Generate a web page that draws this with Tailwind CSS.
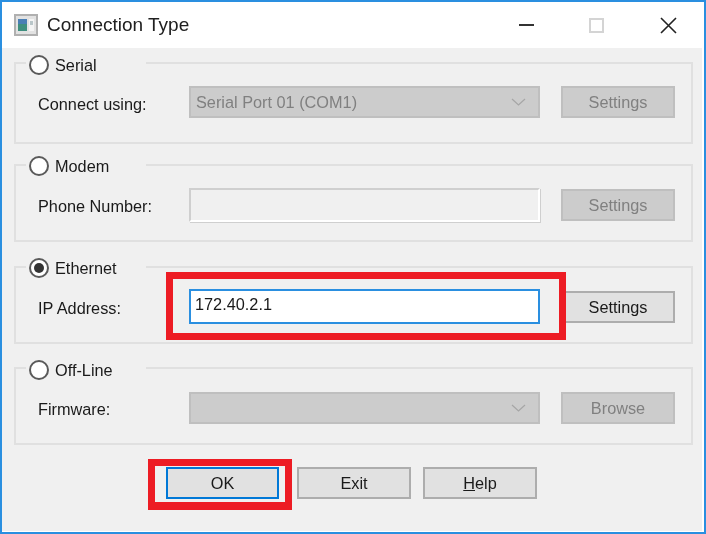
<!DOCTYPE html>
<html lang="en">
<head>
  <meta charset="UTF-8" />
  <title>Connection Type</title>
  <script src="https://cdn.jsdelivr.net/npm/@tailwindcss/browser@4"></script>
</head>
<body class="bg-white">

  <!-- Window -->
  <div class="relative w-[706px] h-[534px] overflow-hidden bg-white border-2 border-[#2a8fe0] font-['Liberation_Sans',sans-serif] text-[16.3px] text-[#1a1a1a] blur-[0.45px]">

    <!-- Title bar -->
    <div class="h-[46px] flex items-center">
      <svg class="ml-[12px] w-[24px] h-[22px]" viewBox="0 0 24 22">
        <rect x="1" y="1" width="22" height="20" fill="#e2e2e2" stroke="#b0b0b0" stroke-width="2" />
        <rect x="4" y="5" width="9" height="12" fill="#3f8f7f" />
        <rect x="4" y="5" width="9" height="5" fill="#4a7fb5" />
        <rect x="15" y="5" width="5" height="12" fill="#f4f4f4" />
        <rect x="16" y="7" width="3" height="4" fill="#b9c6c9" />
      </svg>
      <span class="ml-[9px] text-[19px] text-[#202020]">Connection Type</span>
      <div class="ml-auto flex items-center">
        <div class="w-[15px] h-[2px] bg-[#333]"></div>
        <div class="ml-[55px] w-[15px] h-[15px] border-2 border-[#d4d4d4]"></div>
        <svg class="ml-[56px] mr-[27px] w-[17px] h-[17px]" viewBox="0 0 17 17" fill="none" stroke="#222" stroke-width="1.6">
          <path d="M1 1L16 16M16 1L1 16" />
        </svg>
      </div>
    </div>

    <!-- Body -->
    <div class="w-[700px] h-[483px] bg-[#f0f0f0] pt-[14px] pl-[12px]">

      <!-- Serial -->
      <div class="relative w-[679px] h-[82px] border-2 border-[#e0e0e0] flex items-start pt-[22px]">
        <div class="absolute left-[10px] -top-[9px] w-[120px] h-[20px] bg-[#f0f0f0] pl-[3px] flex items-center gap-[6px]">
          <span class="w-[20px] h-[20px] rounded-full border-2 border-[#5a5a5a] bg-white"></span>
          <span>Serial</span>
        </div>
        <div class="flex items-center h-[32px]">
          <span class="w-[173px] pl-[22px] pt-[4px]">Connect using:</span>
          <div class="w-[351px] h-[32px] bg-[#cccccc] border-2 border-[#bfbfbf] flex items-center justify-between pl-[5px] pr-[12px] text-[#808080]">
            <span>Serial Port 01 (COM1)</span>
            <svg class="w-[15px] h-[8px]" viewBox="0 0 15 8" fill="none" stroke="#a6a6a6" stroke-width="1.2"><path d="M1 1l6.5 6L14 1" /></svg>
          </div>
          <div class="ml-[21px] w-[114px] h-[32px] bg-[#cccccc] border-2 border-[#bfbfbf] flex items-center justify-center text-[#808080]">Settings</div>
        </div>
      </div>

      <!-- Modem -->
      <div class="relative mt-[20px] w-[679px] h-[78px] border-2 border-[#e0e0e0] flex items-start pt-[22px]">
        <div class="absolute left-[10px] -top-[10px] w-[120px] h-[20px] bg-[#f0f0f0] pl-[3px] flex items-center gap-[6px]">
          <span class="w-[20px] h-[20px] rounded-full border-2 border-[#5a5a5a] bg-white"></span>
          <span>Modem</span>
        </div>
        <div class="flex items-center h-[34px]">
          <span class="w-[173px] pl-[22px] pt-[2px]">Phone Number:</span>
          <div class="w-[351px] h-[34px] bg-[#f0f0f0] border-2 border-[#cfcfcf] border-r-white border-b-white shadow-[1px_1px_0_#cfcfcf]"></div>
          <div class="ml-[21px] w-[114px] h-[32px] bg-[#cccccc] border-2 border-[#bfbfbf] flex items-center justify-center text-[#808080] pt-[1px]">Settings</div>
        </div>
      </div>

      <!-- Ethernet -->
      <div class="relative mt-[24px] w-[679px] h-[78px] border-2 border-[#e0e0e0] flex items-start pt-[21px]">
        <div class="absolute left-[10px] -top-[10px] w-[120px] h-[20px] bg-[#f0f0f0] pl-[3px] flex items-center gap-[6px]">
          <span class="w-[20px] h-[20px] rounded-full border-2 border-[#5a5a5a] bg-white flex items-center justify-center">
            <span class="w-[10px] h-[10px] rounded-full bg-[#333]"></span>
          </span>
          <span>Ethernet</span>
        </div>
        <div class="flex items-center h-[35px]">
          <span class="w-[173px] pl-[22px] pt-[3px]">IP Address:</span>
          <div class="w-[351px] h-[35px] bg-white border-2 border-[#2a8fe0] flex items-center pl-[4px] pb-[4px]">172.40.2.1</div>
          <div class="ml-[21px] w-[114px] h-[32px] bg-[#e1e1e1] border-2 border-[#adadad] flex items-center justify-center pt-[1px]">Settings</div>
        </div>
      </div>

      <!-- Off-Line -->
      <div class="relative mt-[23px] w-[679px] h-[78px] border-2 border-[#e0e0e0] flex items-start pt-[22px]">
        <div class="absolute left-[10px] -top-[9px] w-[120px] h-[20px] bg-[#f0f0f0] pl-[3px] flex items-center gap-[6px]">
          <span class="w-[20px] h-[20px] rounded-full border-2 border-[#5a5a5a] bg-white"></span>
          <span>Off-Line</span>
        </div>
        <div class="flex items-center h-[33px]">
          <span class="w-[173px] pl-[22px] pt-[3px]">Firmware:</span>
          <div class="w-[351px] h-[32px] bg-[#cccccc] border-2 border-[#bfbfbf] flex items-center justify-end pr-[12px]">
            <svg class="w-[15px] h-[8px]" viewBox="0 0 15 8" fill="none" stroke="#a6a6a6" stroke-width="1.2"><path d="M1 1l6.5 6L14 1" /></svg>
          </div>
          <div class="ml-[21px] w-[114px] h-[32px] bg-[#cccccc] border-2 border-[#bfbfbf] flex items-center justify-center text-[#808080] pt-[1px]">Browse</div>
        </div>
      </div>

      <!-- Buttons -->
      <div class="mt-[22px] ml-[152px] flex items-center">
        <div class="w-[113px] h-[32px] bg-[#e1e1e1] border-2 border-[#0078d7] flex items-center justify-center">OK</div>
        <div class="ml-[18px] w-[114px] h-[32px] bg-[#e1e1e1] border-2 border-[#adadad] flex items-center justify-center">Exit</div>
        <div class="ml-[12px] w-[114px] h-[32px] bg-[#e1e1e1] border-2 border-[#adadad] flex items-center justify-center"><span><u>H</u>elp</span></div>
      </div>
    </div>

    <!-- Red highlights -->
    <div class="absolute left-[164px] top-[270px] w-[400px] h-[68px] border-[7px] border-[#ed1c24]"></div>
    <div class="absolute left-[146px] top-[457px] w-[144px] h-[51px] border-[7px] border-b-[8px] border-[#ed1c24]"></div>
  </div>

</body>
</html>
